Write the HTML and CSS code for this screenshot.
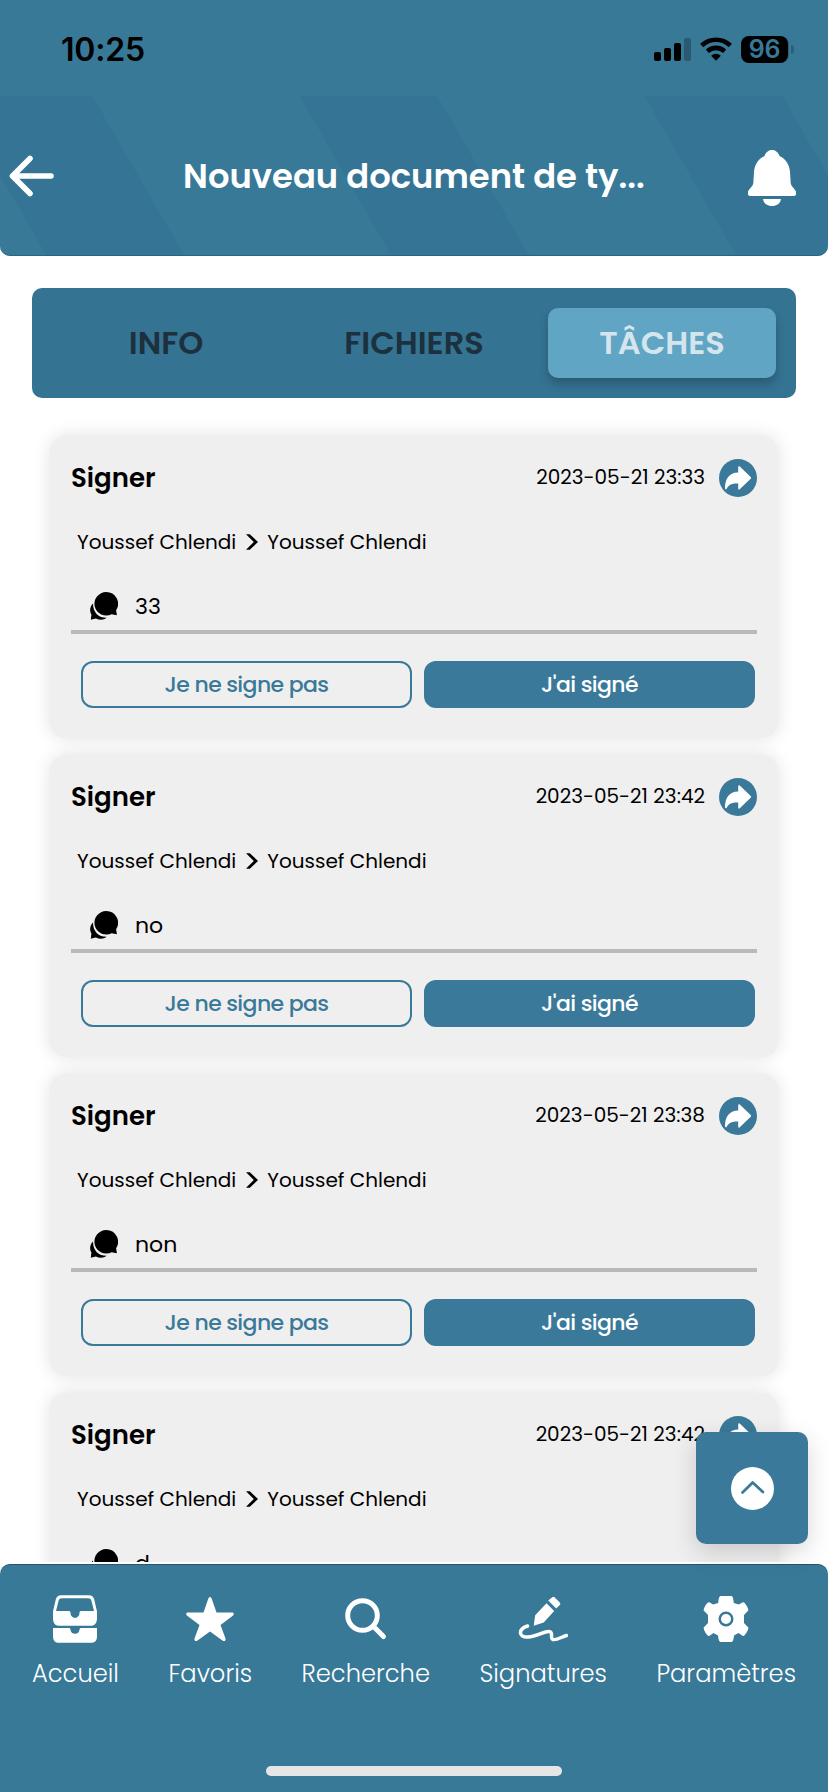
FILE: index.html
```html
<!DOCTYPE html>
<html lang="fr">
<head>
<meta charset="utf-8">
<title>Tâches</title>
<link rel="stylesheet" href="styles.css">
</head>
<body>
<svg class="defs" width="0" height="0">
  <symbol id="share" viewBox="0 0 38 38"><circle cx="19" cy="19" r="19" fill="#3a7999"/><path d="M19.200 8.200c0-1 .9-1.300 1.600-.6L31.700 18a1.200 1.200 0 0 1 0 1.800L20.800 30.300c-.7.7-1.600.4-1.600-.6v-5.200c-6.500-.2-9.500 1.300-11.500 5.300-.5.900-1.700.7-1.700-.5C6 20 10 13.600 19.200 13.400z" fill="#fff"/></symbol>
  <symbol id="chat" viewBox="0 0 28 28"><path d="M3 11.500C-.5 15-.5 19.500 1.400 22.500L.800 27.800l5-1.300c4 1.800 8 1.500 11-.7C9 26 3 21 3 11.500z"/><path d="M16.300 0a11.800 11.800 0 1 0 5.300 22.300l5.300 1-.8-5A11.800 11.800 0 0 0 16.300 0z"/></symbol>
  <symbol id="next" viewBox="0 0 12 16"><path d="M0 .3h3.800L12 8 3.800 15.700H0L7.800 8z"/></symbol>
</svg>
<div class="screen">
  <div class="status">
    <span class="clock">10:25</span>
    <div class="indicators">
      <svg width="38" height="24" viewBox="0 0 38 24"><rect x="0" y="14" width="7" height="9" rx="2"/><rect x="10" y="10" width="7" height="13" rx="2"/><rect x="20" y="5" width="7" height="18" rx="2"/><rect x="30" y="0" width="7" height="23" rx="2" opacity=".25"/></svg>
      <svg class="wifi" width="32" height="24" viewBox="0 0 32 24"><path d="M1.700 8.500a20.500 20.500 0 0 1 28.600 0M7.400 14.300a12.500 12.500 0 0 1 17.200 0" fill="none" stroke="#000" stroke-width="4.600"/><path d="M16 23.700l-4.900-4.900a7 7 0 0 1 9.800 0z"/></svg>
      <div class="battery"><span class="level">96</span><span class="tip"></span></div>
    </div>
  </div>
  <header class="header">
    <svg class="back" width="46" height="42" viewBox="0 0 46 42"><path d="M22 3.500L4.500 21 22 38.500M5.500 21H43" fill="none" stroke="#fff" stroke-width="5.600" stroke-linecap="round" stroke-linejoin="round"/></svg>
    <h1 class="title">Nouveau document de ty...</h1>
    <svg class="bell" width="50" height="57" viewBox="0 0 50 57"><path d="M17.500 6C19 1.800 22 0 25 0s6 1.800 7.500 6C39 9 42.500 15 43 22l.7 11c.2 3 3.800 5.500 5.300 8.500v3c-.5 1-1.500 1.500-3 1.500H4c-1.500 0-2.500-.5-3-1.500v-3c1.500-3 5.100-5.500 5.300-8.500L7 22c.5-7 4-13 10.500-16z" fill="#fff"/><path d="M16 49h18c-.5 4.500-4.500 7-9 7s-8.500-2.500-9-7z" fill="#fff"/></svg>
  </header>
  <nav class="tabs">
    <span class="tab">INFO</span>
    <span class="tab">FICHIERS</span>
    <span class="tab active">TÂCHES</span>
  </nav>
  <main class="list">
    <article class="card">
      <div class="head"><h2 class="name">Signer</h2><time class="date">2023-05-21 23:33</time><svg width="38" height="38"><use href="#share"/></svg></div>
      <div class="people"><span>Youssef Chlendi</span><svg width="12" height="16"><use href="#next"/></svg><span>Youssef Chlendi</span></div>
      <div class="comment"><svg width="28" height="28"><use href="#chat"/></svg><span>33</span></div>
      <div class="actions"><span class="btn">Je ne signe pas</span><span class="btn filled">J'ai signé</span></div>
    </article>
    <article class="card">
      <div class="head"><h2 class="name">Signer</h2><time class="date">2023-05-21 23:42</time><svg width="38" height="38"><use href="#share"/></svg></div>
      <div class="people"><span>Youssef Chlendi</span><svg width="12" height="16"><use href="#next"/></svg><span>Youssef Chlendi</span></div>
      <div class="comment"><svg width="28" height="28"><use href="#chat"/></svg><span>no</span></div>
      <div class="actions"><span class="btn">Je ne signe pas</span><span class="btn filled">J'ai signé</span></div>
    </article>
    <article class="card">
      <div class="head"><h2 class="name">Signer</h2><time class="date">2023-05-21 23:38</time><svg width="38" height="38"><use href="#share"/></svg></div>
      <div class="people"><span>Youssef Chlendi</span><svg width="12" height="16"><use href="#next"/></svg><span>Youssef Chlendi</span></div>
      <div class="comment"><svg width="28" height="28"><use href="#chat"/></svg><span>non</span></div>
      <div class="actions"><span class="btn">Je ne signe pas</span><span class="btn filled">J'ai signé</span></div>
    </article>
    <article class="card">
      <div class="head"><h2 class="name">Signer</h2><time class="date">2023-05-21 23:42</time><svg width="38" height="38"><use href="#share"/></svg></div>
      <div class="people"><span>Youssef Chlendi</span><svg width="12" height="16"><use href="#next"/></svg><span>Youssef Chlendi</span></div>
      <div class="comment"><svg width="28" height="28"><use href="#chat"/></svg><span>d</span></div>
    </article>
  </main>
  <footer class="nav">
    <div class="items">
      <div class="item"><svg width="50" height="50" viewBox="0 0 50 50"><path d="M11 1.300h28c3 0 4.500 1.500 5.300 4.500L47 17.500V24c0 5-2 7.800-6.500 7.800h-31C5 31.800 3 29 3 24v-6.500L5.700 5.800C6.500 2.800 8 1.300 11 1.300zm1 3C10 4.300 9 5 8.500 7L6 17h13c1.200 0 1.500 1 1.600 2.500a4.400 4.400 0 0 0 8.800 0C29.500 18 29.800 17 31 17h13L41.500 7c-.5-2-1.500-2.700-3.500-2.700z" fill="#fff" fill-rule="evenodd"/><path d="M3 34h16c1.200 0 1.400 1 1.600 2.300a4.500 4.500 0 0 0 8.800 0C29.600 35 29.800 34 31 34h16v8c0 5-2 6.800-6.500 6.800h-31C5 48.800 3 47 3 42z" fill="#fff"/></svg><span>Accueil</span></div>
      <div class="item"><svg width="50" height="50" viewBox="0 0 50 50"><path d="M25 3c1 0 1.500 1 2 2.500l4.500 12.900h15.700c2 0 2 2.300.6 3.300L35.500 31l5 13.500c.6 2-1 3.300-2.700 2.200L25 37.500 12.200 46.700c-1.700 1.100-3.300-.2-2.700-2.200l5-13.500L2.200 21.700c-1.400-1-1.400-3.300.6-3.300h15.700L23 5.500c.5-1.500 1-2.500 2-2.500z" fill="#fff"/></svg><span>Favoris</span></div>
      <div class="item"><svg width="50" height="50" viewBox="0 0 50 50"><circle cx="21.500" cy="21.500" r="14.800" fill="none" stroke="#fff" stroke-width="5"/><path d="M32.500 32.500l10 10" stroke="#fff" stroke-width="5" stroke-linecap="round"/></svg><span>Recherche</span></div>
      <div class="item"><svg width="50" height="50" viewBox="0 0 50 50"><path d="M34.300 3.300c.7-.7 1.500-.7 2.200 0l5.300 5.200c.7.700.7 1.500 0 2.500l-3.600 3.600-8-8zM28.500 9.300l7.700 7.700-10.500 11.500-10 3.300 1.500-10.500z" fill="#fff"/><path d="M9.500 32C0 35 0 43.500 10 43c9-.5 16-5.800 21-5.500 5 .3.500 7 4 8 4 1 9-3 13.500-4" fill="none" stroke="#fff" stroke-width="3.500" stroke-linecap="round"/></svg><span>Signatures</span></div>
      <div class="item"><svg width="50" height="50" viewBox="0 0 50 50"><path d="M20 2h10c2 0 2.200 2 2.800 7l5 1.500 4-2.200c2-.8 6 6.500 5.500 8.200L43 21v8l4.300 4.500c.5 2-3.500 9-5.500 8.400L37.500 39 33 41.500c-.5 4-.8 6.500-3 6.500H20c-2 0-2.500-2.500-3-6.500L12.500 39l-4.300 2.900c-2 .6-6-6.400-5.500-8.400L7 29v-8l-4.300-4.500C2.200 14.800 6.200 7.500 8.200 8.300l4 2.200 5-1.500c.6-5 .8-7 2.800-7zm5 15.500a7.500 7.500 0 1 0 0 15 7.500 7.500 0 0 0 0-15z" fill="#fff" fill-rule="evenodd"/><circle cx="25" cy="25" r="5" fill="#fff"/></svg><span>Paramètres</span></div>
    </div>
    <div class="home"></div>
  </footer>
  <div class="top-button"><svg width="44" height="44" viewBox="0 0 44 44"><circle cx="22.500" cy="22.500" r="21.500" fill="#fff"/><path d="M12.500 26.500L22.700 16.500l10.200 9.500" fill="none" stroke="#3a7999" stroke-width="2.700" stroke-linecap="round" stroke-linejoin="round"/></svg></div>
</div>
</body>
</html>
```
FILE: styles.css
```css
* { box-sizing: border-box; }
body { margin: 0; background: #fff; color: #000; font-family: Poppins, Inter, "Liberation Sans", sans-serif; }
.defs { position: absolute; }
svg { display: block; flex: none; }
h1, h2 { margin: 0; }
.screen { position: relative; width: 828px; height: 1792px; overflow: hidden; display: flex; flex-direction: column; }

.status { flex: none; height: 96px; background: #397998; display: flex; justify-content: space-between; padding: 0 33px 0 61px; }
.clock { font: 600 32px/36px Inter, sans-serif; margin-top: 32px; letter-spacing: -.2px; }
.indicators { display: flex; margin-top: 36px; }
.indicators svg { margin-top: 2px; }
.indicators .wifi { margin: 1px 9px 0 8px; }
.battery { display: flex; align-items: center; height: 27px; width: 54px; }
.level { width: 47px; height: 27px; border-radius: 8px; background: #000; box-shadow: 1px 0 #2c6078; color: #397998; font: 600 25px/27px Inter, sans-serif; text-align: center; letter-spacing: -.3px; }
.tip { width: 3px; height: 9px; margin-left: 3px; border-radius: 0 4px 4px 0; background: #2c6078; }

.header { flex: none; height: 160px; border-radius: 0 0 10px 10px; border-bottom: 1px solid #2b6480; display: grid; grid-template-columns: 1fr auto 1fr; align-items: center;
  background: repeating-linear-gradient(60.100deg, #397998 0 39.900px, #357495 39.900px 159.500px, #397998 159.500px 299px); }
.back { margin-left: 8px; }
.bell { justify-self: end; margin: 5px 31px 0 0; }
.title { font-size: 33.800px; line-height: 50px; font-weight: 600; color: #fff; white-space: nowrap; margin-top: 2px; }

.tabs { flex: none; margin: 32px 32px 0; height: 110px; padding: 20px; border-radius: 10px; background: #357393; display: grid; grid-template-columns: repeat(3, 1fr); gap: 20px; }
.tab { display: flex; align-items: center; justify-content: center; border-radius: 10px; font-size: 32px; font-weight: 600; color: #1c313d; }
.active { background: #61a5c4; color: #d5e5ed; box-shadow: 0 6px 10px rgba(0,0,0,.22); }

.list { flex: none; height: 1164px; overflow: hidden; padding: 38px 50px 0; display: flex; flex-direction: column; gap: 17px; }
.card { flex: none; height: 302px; border-radius: 16px; background: #efefef; box-shadow: 0 0 18px rgba(0,0,0,.12); padding: 23px 21px 0; }
.head { display: flex; align-items: center; height: 38px; }
.name { font-size: 26px; font-weight: 600; flex: 1; }
.date { font-size: 20px; margin: -2px 14px 0 0; }
.people { display: flex; align-items: center; height: 30px; margin: 30px 0 0 6px; font-size: 20px; gap: 9.500px; }
.comment { display: flex; align-items: center; height: 56px; margin-top: 21px; padding: 4px 0 0 19px; gap: 17px; font-size: 22px; border-bottom: 4px solid #b9b9b9; }
.actions { display: grid; grid-template-columns: 1fr 1fr; gap: 12px; margin: 27px 2px 0 10px; }
.btn { height: 47px; border: 2px solid #3a7999; border-radius: 12px; display: flex; align-items: center; justify-content: center; font-size: 22px; letter-spacing: -.6px; font-weight: 500; color: #3a7999; }
.filled { background: #3a7999; color: #fff; }

.nav { flex: none; margin-top: 2px; height: 228px; border-radius: 10px 10px 0 0; background: #397998; border-top: 1px solid #24566f; padding: 29px 32px 0; display: flex; flex-direction: column; align-items: center; }
.items { width: 764px; display: flex; justify-content: space-between; }
.item { display: flex; flex-direction: column; align-items: center; color: #fff; font-size: 24.200px; font-weight: 300; gap: 15px; }
.item span { line-height: 30px; white-space: nowrap; }
.home { width: 296px; height: 10px; border-radius: 5px; background: #e6e6e6; margin-top: 77px; }
.top-button { position: absolute; left: 696px; top: 1432px; width: 112px; height: 112px; border-radius: 10px; background: #3a7999; box-shadow: 0 8px 24px rgba(0,0,0,.16); display: flex; align-items: center; justify-content: center; }
```
